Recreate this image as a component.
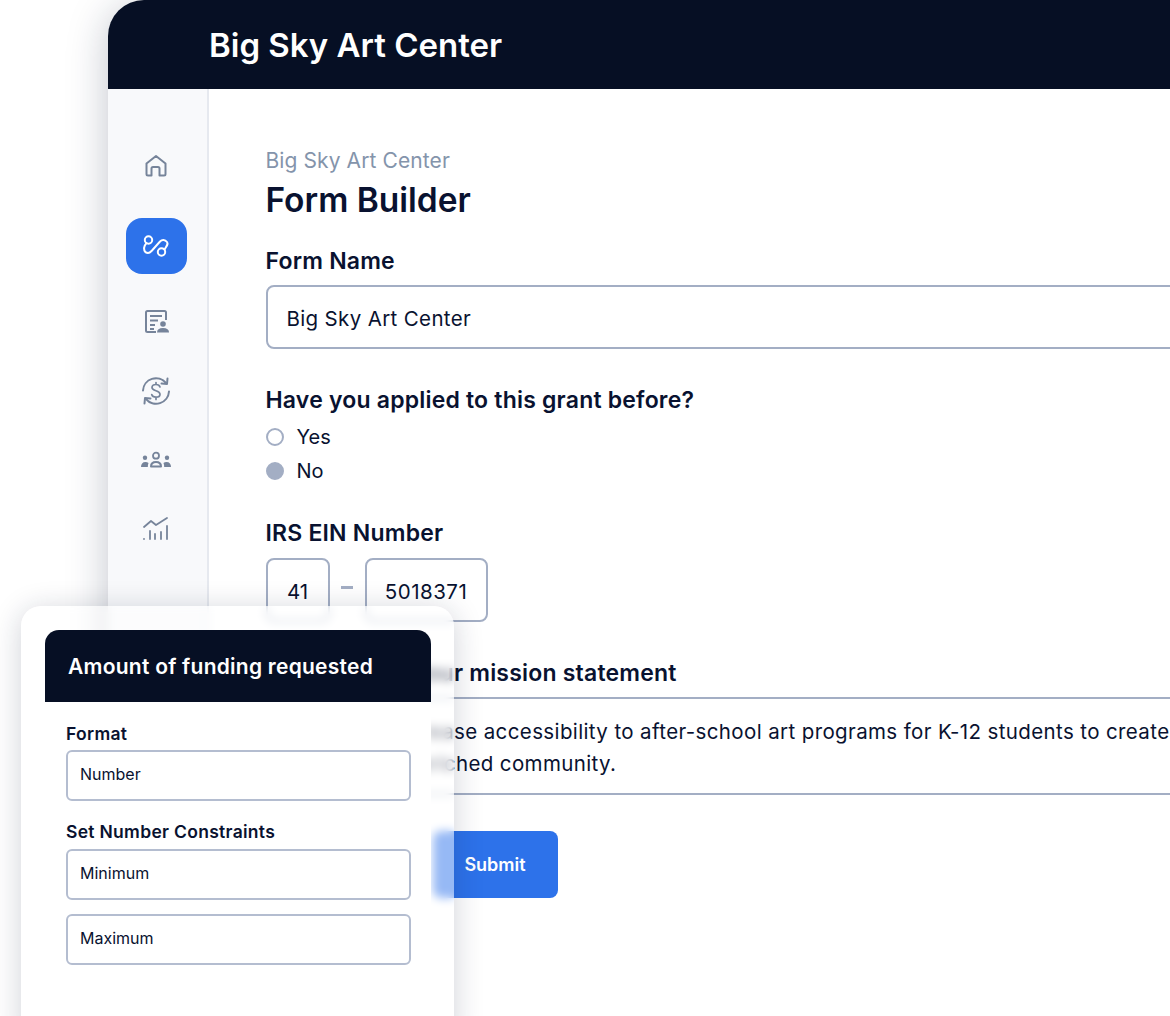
<div class="page">
  <div class="window">
    <header class="topbar"><span class="brand">Big Sky Art Center</span></header>
    <div class="body">
      <nav class="rail">
        <div class="nav-item">
          <svg width="26" height="26" viewBox="0 0 26 26" fill="none" stroke="#76849a" stroke-width="2" stroke-linejoin="round"><path d="M3.500 10.500 13 3l9.500 7.500V21a1.500 1.500 0 0 1-1.500 1.500h-4.500V15.500a1.500 1.500 0 0 0-1.500-1.500h-5a1.500 1.500 0 0 0-1.500 1.500v7H5A1.500 1.500 0 0 1 3.500 21z"/></svg>
        </div>
        <div class="nav-item active">
          <svg width="28" height="28" viewBox="0 0 28 28" fill="none" stroke="#fff" stroke-width="2" stroke-linecap="round"><circle cx="6.500" cy="8" r="3.700"/><circle cx="19.500" cy="20" r="3.700"/><path d="M4.500 11 2.800 13.500C1 17 2.500 21 6 21c2 0 3-1.500 4-2.500l8-9c2-2 5-2 7 .5 1.500 2 0 3.500-2.500 7.500"/></svg>
        </div>
        <div class="nav-item">
          <svg class="form-icon" width="26" height="26" viewBox="0 0 26 26" fill="none" stroke="#76849a" stroke-width="2"><path d="M12 23H3.500a1.500 1.500 0 0 1-1.500-1.500v-18A1.500 1.500 0 0 1 3.500 2h17A1.500 1.500 0 0 1 22 3.500V11"/><path d="M6 7h12M6 11.500h8M6 16h5M6 20h4" stroke-width="1.800"/><circle cx="19" cy="15" r="2.800" fill="#76849a" stroke="none"/><path d="M13 23.500c0-3 2-4.500 6-4.500s6 1.500 6 4.500z" fill="#76849a" stroke="none"/></svg>
        </div>
        <div class="nav-item">
          <svg width="32" height="32" viewBox="0 0 32 32" fill="none" stroke="#76849a" stroke-width="2" stroke-linecap="round" stroke-linejoin="round"><path d="M3 15.500A13 13 0 0 1 26 8"/><path d="M29 16.500A13 13 0 0 1 6 24"/><path d="M27.500 3.500 27 9l-5.500-.5M4.500 28.500 5 23l5.500.5"/><path d="M20 12c-.5-1.800-2-2.500-4-2.500-2.500 0-4 1.200-4 3 0 4 8 2.500 8 6.700 0 1.800-1.700 3-4 3-2.200 0-3.800-.9-4.300-2.700M16 7.500v2M16 22.500v2" stroke-width="1.700"/></svg>
        </div>
        <div class="nav-item">
          <svg width="32" height="20" viewBox="0 0 32 20" fill="#76849a"><circle cx="16" cy="5.700" r="3" fill="none" stroke="#76849a" stroke-width="1.800"/><path d="M11 16.500c0-3 1.500-4.500 5-4.500s5 1.500 5 4.500z" fill="none" stroke="#76849a" stroke-width="2" stroke-linejoin="round"/><circle cx="5" cy="7.700" r="2.200"/><circle cx="27" cy="7.700" r="2.200"/><path d="M1 17c0-3 1.500-5 4.500-5 1.200 0 2.300.3 3 .9C8 14 7.800 15.500 7.800 17zM31 17c0-3-1.500-5-4.500-5-1.200 0-2.300.3-3 .9.500 1.100.7 2.600.7 4.100z"/></svg>
        </div>
        <div class="nav-item">
          <svg width="28" height="26" viewBox="0 0 28 26" fill="none" stroke="#76849a" stroke-width="1.800" stroke-linecap="round" stroke-linejoin="round"><path d="M2 11 9 5l5 4L25 2"/><path d="M2 22.800v.2M8 15v8M13 18v5M19 16v7M25 10v13"/></svg>
        </div>
      </nav>
      <main class="content">
        <p class="crumb">Big Sky Art Center</p>
        <h1>Form Builder</h1>

        <div class="label first">Form Name</div>
        <div class="field name">Big Sky Art Center</div>

        <div class="label q">Have you applied to this grant before?</div>
        <div class="radios">
          <div class="radio"><span class="dot"></span>Yes</div>
          <div class="radio"><span class="dot on"></span>No</div>
        </div>

        <div class="label ein-label">IRS EIN Number</div>
        <div class="ein">
          <div class="field short">41</div>
          <span class="dash"></span>
          <div class="field long">5018371</div>
        </div>

        <div class="label mission">Please enter your mission statement</div>
        <div class="area">We aim to increase accessibility to after-school art programs for K-12 students to create<br />and a more enriched community.</div>

        <button class="submit" type="button">Submit</button>
      </main>
    </div>
  </div>

  <aside class="card">
    <div class="panel">
      <div class="panel-head">Amount of funding requested</div>
      <div class="panel-body">
        <div class="mini-label">Format</div>
        <div class="mini-field">Number</div>
        <div class="mini-label gap">Set Number Constraints</div>
        <div class="mini-field">Minimum</div>
        <div class="mini-field next">Maximum</div>
      </div>
    </div>
  </aside>
</div>

<style>
  :global(body) {
    margin: 0;
    background: #fff;
  }
  .page {
    position: relative;
    width: 1170px;
    height: 1016px;
    overflow: hidden;
    font-family: Inter, "Liberation Sans", sans-serif;
    color: #091230;
    background: #fff;
  }
  .window {
    margin-left: 108px;
    width: 1300px;
    height: 1100px;
    border-radius: 36px 36px 0 0;
    background: #fff;
    box-shadow: 0 6px 40px rgba(20, 30, 60, 0.26);
    overflow: hidden;
  }
  .topbar {
    height: 89px;
    background: #060f24;
    display: flex;
    align-items: center;
    padding-left: 101px;
    box-sizing: border-box;
  }
  .brand {
    color: #fff;
    font-size: 33px;
    font-weight: 600;
  }
  .body {
    display: flex;
    height: 1011px;
  }
  .rail {
    width: 101px;
    box-sizing: border-box;
    background: #f8f9fb;
    border-right: 2px solid #e6e9ef;
    padding: 57px 0 0 17.500px;
    display: flex;
    flex-direction: column;
    gap: 29px;
  }
  .nav-item {
    width: 61px;
    height: 40px;
    display: flex;
    align-items: center;
    justify-content: center;
  }
  .nav-item.active {
    height: 56px;
    margin: 3px 0 -1px;
    background: #2d72ea;
    border-radius: 16px;
  }
  .form-icon {
    margin-left: 2px;
  }
  .content {
    flex: 1;
    padding: 60px 0 0 56.500px;
  }
  .crumb {
    margin: 0;
    font-size: 21px;
    line-height: 24px;
    letter-spacing: 0.1px;
    color: #8494ab;
  }
  h1 {
    margin: 5px 0 0;
    font-size: 33.500px;
    line-height: 44px;
    font-weight: 600;
  }
  .label {
    font-size: 23px;
    line-height: 28px;
    font-weight: 600;
    letter-spacing: 0.2px;
  }
  .first {
    margin-top: 25px;
  }
  .field {
    box-sizing: border-box;
    border: 2px solid #a3aec4;
    border-radius: 8px;
    font-size: 20.500px;
    letter-spacing: 0.35px;
    display: flex;
    align-items: center;
    padding-top: 2px;
  }
  .name {
    margin-top: 10px;
    height: 64px;
    padding-left: 19px;
  }
  .q {
    margin-top: 37px;
  }
  .radios {
    margin-top: 10px;
    display: flex;
    flex-direction: column;
    gap: 8px;
  }
  .radio {
    display: flex;
    align-items: center;
    gap: 13px;
    font-size: 20px;
    line-height: 26px;
  }
  .dot {
    box-sizing: border-box;
    width: 18px;
    height: 18px;
    border-radius: 50%;
    border: 2px solid #a3aec4;
  }
  .dot.on {
    background: #a3aec4;
  }
  .ein-label {
    margin-top: 35px;
  }
  .ein {
    margin-top: 11px;
    display: flex;
    align-items: center;
  }
  .short {
    width: 64px;
    height: 64px;
    justify-content: center;
    letter-spacing: 0;
  }
  .dash {
    width: 12px;
    height: 3px;
    background: #a3aec4;
    margin: -6px 12px 0 11px;
  }
  .long {
    width: 123px;
    height: 64px;
    justify-content: center;
    letter-spacing: 0.5px;
  }
  .mission {
    margin-top: 37px;
  }
  .area {
    margin-top: 10px;
    height: 98px;
    box-sizing: border-box;
    border-top: 2px solid #a3aec4;
    border-bottom: 2px solid #a3aec4;
    padding: 17px 0 0 21px;
    font-size: 20.500px;
    line-height: 32px;
    letter-spacing: 0.38px;
    white-space: nowrap;
  }
  .submit {
    display: block;
    margin: 36px 0 0 167px;
    width: 125px;
    height: 67px;
    border: 0;
    border-radius: 8px;
    background: #2d72ea;
    color: #fff;
    font: 600 18px Inter, "Liberation Sans", sans-serif;
    padding: 0;
  }
  .card {
    position: absolute;
    left: 21px;
    top: 606px;
    width: 433px;
    height: 440px;
    box-sizing: border-box;
    padding: 24px 23px 0 24px;
    border-radius: 20px;
    background: rgba(255, 255, 255, 0.5);
    backdrop-filter: blur(5px);
    box-shadow: 0 4px 30px rgba(20, 30, 60, 0.2);
  }
  .panel {
    background: #fff;
    height: 100%;
    border-radius: 14px 14px 0 0;
  }
  .panel-head {
    height: 72px;
    box-sizing: border-box;
    padding: 1px 0 0 23px;
    display: flex;
    align-items: center;
    background: #060f24;
    color: #fff;
    font-size: 21px;
    font-weight: 600;
    letter-spacing: 0.25px;
    border-radius: 14px 14px 0 0;
  }
  .panel-body {
    padding: 22px 20px 0 21px;
  }
  .mini-label {
    font-size: 17.500px;
    line-height: 20px;
    font-weight: 600;
    letter-spacing: 0.3px;
  }
  .mini-label.gap {
    margin-top: 21px;
    padding-bottom: 1px;
  }
  .mini-field {
    margin-top: 6px;
    height: 51px;
    box-sizing: border-box;
    border: 2px solid #b4bdd0;
    border-radius: 6px;
    padding: 0 0 4px 12px;
    display: flex;
    align-items: center;
    font-size: 16px;
  }
  .mini-field.next {
    margin-top: 14px;
  }
</style>
